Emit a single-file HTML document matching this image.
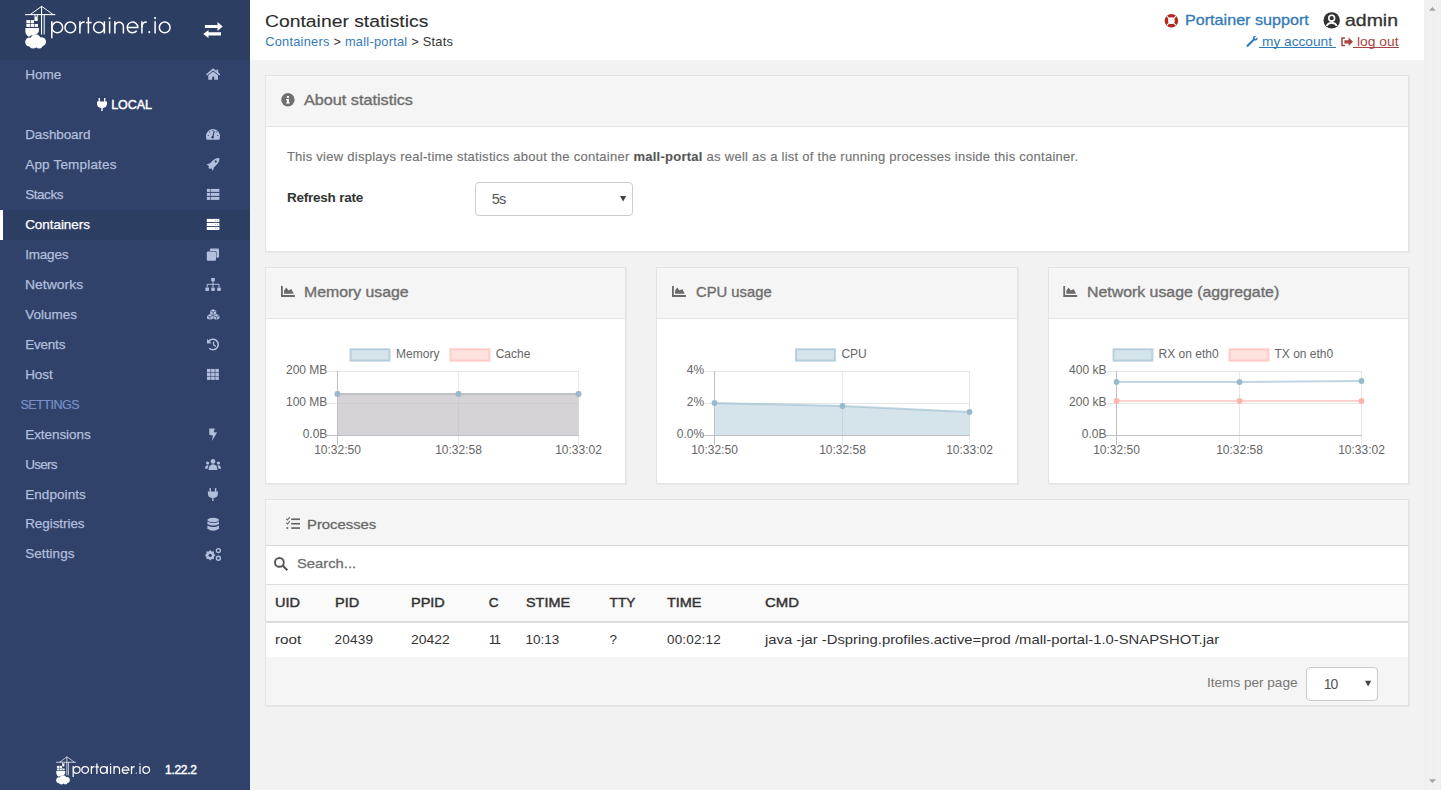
<!DOCTYPE html>
<html><head><meta charset="utf-8"><style>
html,body{margin:0;padding:0;width:1441px;height:790px;overflow:hidden;background:#f2f2f2;font-family:"Liberation Sans",sans-serif;}
.t{position:absolute;white-space:nowrap;}
svg{position:absolute;overflow:visible}
</style></head><body>
<div style="position:absolute;left:0;top:0;width:250px;height:790px;background:#30426a"></div>
<div style="position:absolute;left:0;top:0;width:250px;height:60px;background:#2d3e63"></div>
<div style="position:absolute;left:0;top:210px;width:250px;height:30px;background:#2d3e63"></div>
<div style="position:absolute;left:0;top:210px;width:3px;height:30px;background:#fff"></div>
<div class="t" style="left:25.20px;top:66.70px;font-size:13.5px;line-height:16px;color:#b2bfdc;letter-spacing:-0.003px;-webkit-text-stroke:0.25px #b2bfdc;">Home</div>
<div class="t" style="left:25.20px;top:126.70px;font-size:13.5px;line-height:16px;color:#b2bfdc;letter-spacing:-0.105px;-webkit-text-stroke:0.25px #b2bfdc;">Dashboard</div>
<div class="t" style="left:25.20px;top:156.70px;font-size:13.5px;line-height:16px;color:#b2bfdc;letter-spacing:0.187px;-webkit-text-stroke:0.25px #b2bfdc;">App Templates</div>
<div class="t" style="left:25.20px;top:186.70px;font-size:13.5px;line-height:16px;color:#b2bfdc;letter-spacing:-0.443px;-webkit-text-stroke:0.25px #b2bfdc;">Stacks</div>
<div class="t" style="left:25.20px;top:216.70px;font-size:13.5px;line-height:16px;color:#fff;letter-spacing:-0.065px;-webkit-text-stroke:0.25px #fff;">Containers</div>
<div class="t" style="left:25.20px;top:246.70px;font-size:13.5px;line-height:16px;color:#b2bfdc;letter-spacing:-0.194px;-webkit-text-stroke:0.25px #b2bfdc;">Images</div>
<div class="t" style="left:25.20px;top:276.70px;font-size:13.5px;line-height:16px;color:#b2bfdc;transform:scaleX(1.0327);transform-origin:0 0;-webkit-text-stroke:0.25px #b2bfdc;">Networks</div>
<div class="t" style="left:25.20px;top:306.70px;font-size:13.5px;line-height:16px;color:#b2bfdc;letter-spacing:-0.013px;-webkit-text-stroke:0.25px #b2bfdc;">Volumes</div>
<div class="t" style="left:25.20px;top:336.70px;font-size:13.5px;line-height:16px;color:#b2bfdc;letter-spacing:-0.214px;-webkit-text-stroke:0.25px #b2bfdc;">Events</div>
<div class="t" style="left:25.20px;top:366.70px;font-size:13.5px;line-height:16px;color:#b2bfdc;letter-spacing:-0.086px;-webkit-text-stroke:0.25px #b2bfdc;">Host</div>
<div class="t" style="left:25.20px;top:426.50px;font-size:13.5px;line-height:16px;color:#b2bfdc;letter-spacing:-0.060px;-webkit-text-stroke:0.25px #b2bfdc;">Extensions</div>
<div class="t" style="left:25.20px;top:456.50px;font-size:13.5px;line-height:16px;color:#b2bfdc;letter-spacing:-0.713px;-webkit-text-stroke:0.25px #b2bfdc;">Users</div>
<div class="t" style="left:25.20px;top:486.50px;font-size:13.5px;line-height:16px;color:#b2bfdc;letter-spacing:0.070px;-webkit-text-stroke:0.25px #b2bfdc;">Endpoints</div>
<div class="t" style="left:25.20px;top:516.30px;font-size:13.5px;line-height:16px;color:#b2bfdc;letter-spacing:-0.069px;-webkit-text-stroke:0.25px #b2bfdc;">Registries</div>
<div class="t" style="left:25.20px;top:546.10px;font-size:13.5px;line-height:16px;color:#b2bfdc;letter-spacing:0.074px;-webkit-text-stroke:0.25px #b2bfdc;">Settings</div>
<div class="t" style="left:111.20px;top:97.50px;font-size:12.5px;line-height:15px;color:#fff;letter-spacing:-0.048px;-webkit-text-stroke:0.45px #fff;">LOCAL</div>
<div class="t" style="left:20.40px;top:397.70px;font-size:12.6px;line-height:15px;color:#7890c6;letter-spacing:-0.515px;-webkit-text-stroke:0.2px #7890c6;">SETTINGS</div>
<div style="position:absolute;left:250px;top:0;width:1174px;height:790px;background:#f2f2f2"></div>
<div style="position:absolute;left:250px;top:0;width:1174px;height:60px;background:#fff"></div>
<div style="position:absolute;left:250px;top:60px;width:1174px;height:1px;background:#f4f4f4"></div>
<div style="position:absolute;left:1424px;top:0;width:17px;height:790px;background:repeating-linear-gradient(90deg,#eeeeee 0px,#eeeeee 1px,#f2f2f2 1px,#f2f2f2 2px)"></div>
<div class="t" style="left:265.20px;top:11.50px;font-size:17px;line-height:20px;color:#2c2c2c;transform:scaleX(1.1371);transform-origin:0 0;-webkit-text-stroke:0.1px #2c2c2c;">Container statistics</div>
<div class="t" style="left:265.20px;top:33.80px;font-size:12.8px;line-height:15px;color:#333;letter-spacing:0.25px;"><span style="color:#337ab7">Containers</span> &gt; <span style="color:#337ab7">mall-portal</span> &gt; Stats</div>
<div class="t" style="left:1184.60px;top:12.30px;font-size:14.5px;line-height:17px;color:#337ab7;transform:scaleX(1.1130);transform-origin:0 0;-webkit-text-stroke:0.3px #337ab7;">Portainer support</div>
<div class="t" style="left:1345.30px;top:10.70px;font-size:17px;line-height:20px;color:#333;transform:scaleX(1.1447);transform-origin:0 0;-webkit-text-stroke:0.3px #333;">admin</div>
<div class="t" style="left:1261.50px;top:33.50px;font-size:13px;line-height:16px;color:#337ab7;transform:scaleX(1.0531);transform-origin:0 0;">my account</div>
<div class="t" style="left:1357.00px;top:33.50px;font-size:13px;line-height:16px;color:#a94442;transform:scaleX(1.0633);transform-origin:0 0;">log out</div>
<div style="position:absolute;left:1259px;top:47px;width:77px;height:1px;background:#337ab7"></div>
<div style="position:absolute;left:1353px;top:47px;width:46px;height:1px;background:#a94442"></div>
<div style="position:absolute;left:265px;top:75px;width:1144px;height:177px;background:#fff;border:1px solid #e3e3e3;box-sizing:border-box;box-shadow:1px 1px 1px rgba(0,0,0,0.04)"></div>
<div style="position:absolute;left:266px;top:76px;width:1142px;height:51px;background:#f5f5f5;border-bottom:1px solid #e3e3e3;box-sizing:border-box"></div>
<div class="t" style="left:304.00px;top:92.30px;font-size:14.3px;line-height:17px;color:#6e6e6e;transform:scaleX(1.1334);transform-origin:0 0;-webkit-text-stroke:0.35px #6e6e6e;">About statistics</div>
<div class="t" style="left:286.90px;top:148.60px;font-size:13px;line-height:16px;color:#737373;letter-spacing:0.26px;-webkit-text-stroke:0.15px #737373;">This view displays real-time statistics about the container <b style="color:#555">mall-portal</b> as well as a list of the running processes inside this container.</div>
<div class="t" style="left:286.90px;top:189.70px;font-size:13.5px;line-height:16px;color:#333;font-weight:bold;letter-spacing:-0.217px;">Refresh rate</div>
<div style="position:absolute;left:475px;top:182px;width:158px;height:34px;background:#fff;border:1px solid #ccc;border-radius:4px;box-sizing:border-box"></div>
<div class="t" style="left:491.80px;top:190.60px;font-size:14.5px;line-height:17px;color:#555;letter-spacing:-0.814px;">5s</div>
<div style="position:absolute;left:265px;top:267px;width:361px;height:217px;background:#fff;border:1px solid #e3e3e3;box-sizing:border-box;box-shadow:1px 1px 1px rgba(0,0,0,0.04)"></div>
<div style="position:absolute;left:266px;top:268px;width:359px;height:51px;background:#f5f5f5;border-bottom:1px solid #e3e3e3;box-sizing:border-box"></div>
<div class="t" style="left:304.30px;top:284.10px;font-size:14.3px;line-height:17px;color:#6e6e6e;transform:scaleX(1.1070);transform-origin:0 0;-webkit-text-stroke:0.35px #6e6e6e;">Memory usage</div>
<div style="position:absolute;left:656px;top:267px;width:362px;height:217px;background:#fff;border:1px solid #e3e3e3;box-sizing:border-box;box-shadow:1px 1px 1px rgba(0,0,0,0.04)"></div>
<div style="position:absolute;left:657px;top:268px;width:360px;height:51px;background:#f5f5f5;border-bottom:1px solid #e3e3e3;box-sizing:border-box"></div>
<div class="t" style="left:695.70px;top:284.10px;font-size:14.3px;line-height:17px;color:#6e6e6e;transform:scaleX(1.0352);transform-origin:0 0;-webkit-text-stroke:0.35px #6e6e6e;">CPU usage</div>
<div style="position:absolute;left:1048px;top:267px;width:361px;height:217px;background:#fff;border:1px solid #e3e3e3;box-sizing:border-box;box-shadow:1px 1px 1px rgba(0,0,0,0.04)"></div>
<div style="position:absolute;left:1049px;top:268px;width:359px;height:51px;background:#f5f5f5;border-bottom:1px solid #e3e3e3;box-sizing:border-box"></div>
<div class="t" style="left:1087.20px;top:284.10px;font-size:14.3px;line-height:17px;color:#6e6e6e;transform:scaleX(1.1092);transform-origin:0 0;-webkit-text-stroke:0.35px #6e6e6e;">Network usage (aggregate)</div>
<div style="position:absolute;left:265px;top:499px;width:1144px;height:207px;background:#fff;border:1px solid #e3e3e3;box-sizing:border-box;box-shadow:1px 1px 1px rgba(0,0,0,0.04)"></div>
<div style="position:absolute;left:266px;top:500px;width:1142px;height:46px;background:#f5f5f5;border-bottom:1px solid #e3e3e3;box-sizing:border-box"></div>
<div style="position:absolute;left:266px;top:545px;width:1142px;height:40px;background:#fff;border-top:1px solid #d9d9d9;border-bottom:1px solid #ddd;box-sizing:border-box"></div>
<div style="position:absolute;left:266px;top:585px;width:1142px;height:38px;background:#fafafa;border-bottom:2px solid #ddd;box-sizing:border-box"></div>
<div style="position:absolute;left:266px;top:623px;width:1142px;height:34px;background:#fff"></div>
<div style="position:absolute;left:266px;top:657px;width:1142px;height:48px;background:#f5f5f5"></div>
<div class="t" style="left:306.50px;top:516.90px;font-size:13.4px;line-height:16px;color:#686868;transform:scaleX(1.1078);transform-origin:0 0;-webkit-text-stroke:0.3px #686868;">Processes</div>
<div class="t" style="left:297.20px;top:556.10px;font-size:13px;line-height:16px;color:#707070;transform:scaleX(1.1360);transform-origin:0 0;-webkit-text-stroke:0.3px #707070;">Search...</div>
<div class="t" style="left:274.50px;top:595.00px;font-size:13.5px;line-height:16px;color:#333;transform:scaleX(1.0753);transform-origin:0 0;-webkit-text-stroke:0.45px #333;">UID</div>
<div class="t" style="left:274.50px;top:631.80px;font-size:13.5px;line-height:16px;color:#333;transform:scaleX(1.1263);transform-origin:0 0;">root</div>
<div class="t" style="left:334.50px;top:595.00px;font-size:13.5px;line-height:16px;color:#333;transform:scaleX(1.0753);transform-origin:0 0;-webkit-text-stroke:0.45px #333;">PID</div>
<div class="t" style="left:334.50px;top:631.80px;font-size:13.5px;line-height:16px;color:#333;letter-spacing:0.215px;">20439</div>
<div class="t" style="left:411.30px;top:595.00px;font-size:13.5px;line-height:16px;color:#333;transform:scaleX(1.0727);transform-origin:0 0;-webkit-text-stroke:0.45px #333;">PPID</div>
<div class="t" style="left:411.30px;top:631.80px;font-size:13.5px;line-height:16px;color:#333;transform:scaleX(1.0309);transform-origin:0 0;">20422</div>
<div class="t" style="left:488.70px;top:595.00px;font-size:13.5px;line-height:16px;color:#333;-webkit-text-stroke:0.45px #333;">C</div>
<div class="t" style="left:488.70px;top:631.80px;font-size:13.5px;line-height:16px;color:#333;letter-spacing:-1.8px;">11</div>
<div class="t" style="left:525.50px;top:595.00px;font-size:13.5px;line-height:16px;color:#333;transform:scaleX(1.0666);transform-origin:0 0;-webkit-text-stroke:0.45px #333;">STIME</div>
<div class="t" style="left:525.50px;top:631.80px;font-size:13.5px;line-height:16px;color:#333;letter-spacing:0px;">10:13</div>
<div class="t" style="left:609.50px;top:595.00px;font-size:13.5px;line-height:16px;color:#333;letter-spacing:0.152px;-webkit-text-stroke:0.45px #333;">TTY</div>
<div class="t" style="left:609.50px;top:631.80px;font-size:13.5px;line-height:16px;color:#333;letter-spacing:0px;">?</div>
<div class="t" style="left:667.00px;top:595.00px;font-size:13.5px;line-height:16px;color:#333;transform:scaleX(1.0699);transform-origin:0 0;-webkit-text-stroke:0.45px #333;">TIME</div>
<div class="t" style="left:667.00px;top:631.80px;font-size:13.5px;line-height:16px;color:#333;letter-spacing:0.165px;">00:02:12</div>
<div class="t" style="left:764.50px;top:595.00px;font-size:13.5px;line-height:16px;color:#333;transform:scaleX(1.1059);transform-origin:0 0;-webkit-text-stroke:0.45px #333;">CMD</div>
<div class="t" style="left:764.50px;top:631.80px;font-size:13.5px;line-height:16px;color:#333;transform:scaleX(1.0977);transform-origin:0 0;">java -jar -Dspring.profiles.active=prod /mall-portal-1.0-SNAPSHOT.jar</div>
<div class="t" style="left:1206.80px;top:674.50px;font-size:13px;line-height:16px;color:#767676;transform:scaleX(1.0437);transform-origin:0 0;">Items per page</div>
<div style="position:absolute;left:1306px;top:667px;width:72px;height:34px;background:#fff;border:1px solid #ccc;border-radius:4px;box-sizing:border-box"></div>
<div class="t" style="left:1323.80px;top:675.50px;font-size:14px;line-height:17px;color:#555;letter-spacing:-0.972px;">10</div>
<div class="t" style="right:1113.70px;top:363.40px;font-size:12px;line-height:14px;color:#666;">200 MB</div>
<div class="t" style="right:1113.70px;top:395.40px;font-size:12px;line-height:14px;color:#666;">100 MB</div>
<div class="t" style="right:1113.70px;top:427.40px;font-size:12px;line-height:14px;color:#666;">0.0B</div>
<div class="t" style="right:736.80px;top:363.40px;font-size:12px;line-height:14px;color:#666;">4%</div>
<div class="t" style="right:736.80px;top:395.40px;font-size:12px;line-height:14px;color:#666;">2%</div>
<div class="t" style="right:736.80px;top:427.40px;font-size:12px;line-height:14px;color:#666;">0.0%</div>
<div class="t" style="right:334.60px;top:363.40px;font-size:12px;line-height:14px;color:#666;">400 kB</div>
<div class="t" style="right:334.60px;top:395.40px;font-size:12px;line-height:14px;color:#666;">200 kB</div>
<div class="t" style="right:334.60px;top:427.40px;font-size:12px;line-height:14px;color:#666;">0.0B</div>
<div class="t" style="left:314.14px;top:442.70px;font-size:12px;line-height:14px;color:#666;">10:32:50</div>
<div class="t" style="left:435.14px;top:442.70px;font-size:12px;line-height:14px;color:#666;">10:32:58</div>
<div class="t" style="left:555.14px;top:442.70px;font-size:12px;line-height:14px;color:#666;">10:33:02</div>
<div class="t" style="left:691.14px;top:442.70px;font-size:12px;line-height:14px;color:#666;">10:32:50</div>
<div class="t" style="left:819.14px;top:442.70px;font-size:12px;line-height:14px;color:#666;">10:32:58</div>
<div class="t" style="left:946.14px;top:442.70px;font-size:12px;line-height:14px;color:#666;">10:33:02</div>
<div class="t" style="left:1093.14px;top:442.70px;font-size:12px;line-height:14px;color:#666;">10:32:50</div>
<div class="t" style="left:1216.14px;top:442.70px;font-size:12px;line-height:14px;color:#666;">10:32:58</div>
<div class="t" style="left:1338.14px;top:442.70px;font-size:12px;line-height:14px;color:#666;">10:33:02</div>
<div class="t" style="left:396.10px;top:347.00px;font-size:12px;line-height:14px;color:#666;">Memory</div>
<div class="t" style="left:495.70px;top:347.00px;font-size:12px;line-height:14px;color:#666;">Cache</div>
<div class="t" style="left:841.40px;top:347.00px;font-size:12px;line-height:14px;color:#666;">CPU</div>
<div class="t" style="left:1158.60px;top:347.00px;font-size:12px;line-height:14px;color:#666;">RX on eth0</div>
<div class="t" style="left:1274.50px;top:347.00px;font-size:12px;line-height:14px;color:#666;">TX on eth0</div>
<div class="t" style="left:165.00px;top:762.70px;font-size:12px;line-height:14px;color:#fff;letter-spacing:-0.273px;-webkit-text-stroke:0.45px #fff;">1.22.2</div>
<svg style="left:1424px;top:0" width="17" height="790"><path d="M5,10.8 L8.4,7 L11.8,10.8 Z" fill="#a3a3a3"/><path d="M5,779.2 L8.5,783 L12,779.2 Z" fill="#a3a3a3"/></svg>
<svg style="left:0;top:0" width="1441" height="790" viewBox="0 0 1441 790"><path d="M620,196 L626.2,196 L623.1,201.6 Z" fill="#444"/><path d="M1365,680.8 L1371.2,680.8 L1368.1,686.4 Z" fill="#444"/><line x1="327" y1="371.5" x2="578.5" y2="371.5" stroke="#e6e6e6" stroke-width="1"/><line x1="327" y1="403.5" x2="578.5" y2="403.5" stroke="#e6e6e6" stroke-width="1"/><line x1="458.5" y1="371" x2="458.5" y2="445" stroke="#e6e6e6" stroke-width="1"/><line x1="578.5" y1="371" x2="578.5" y2="445" stroke="#e6e6e6" stroke-width="1"/><path d="M337.5,435.5 L337.5,394 L458.5,394 L578.5,394 L578.5,435.5 Z" fill="rgba(255,180,174,0.4)"/><path d="M337.5,435.5 L337.5,394 L458.5,394 L578.5,394 L578.5,435.5 Z" fill="rgba(151,187,205,0.4)"/><path d="M337.5,394 L458.5,394 L578.5,394" fill="none" stroke="rgba(255,180,174,0.6)" stroke-width="2"/><path d="M337.5,394 L458.5,394 L578.5,394" fill="none" stroke="rgba(151,187,205,0.6)" stroke-width="2"/><line x1="327" y1="435.5" x2="578.5" y2="435.5" stroke="#bfbfbf" stroke-width="1"/><line x1="337.5" y1="371" x2="337.5" y2="445" stroke="#bfbfbf" stroke-width="1"/><circle cx="337.5" cy="394" r="2.9" fill="rgb(255,180,174)"/><circle cx="458.5" cy="394" r="2.9" fill="rgb(255,180,174)"/><circle cx="578.5" cy="394" r="2.9" fill="rgb(255,180,174)"/><circle cx="337.5" cy="394" r="2.9" fill="rgb(151,187,205)"/><circle cx="458.5" cy="394" r="2.9" fill="rgb(151,187,205)"/><circle cx="578.5" cy="394" r="2.9" fill="rgb(151,187,205)"/><rect x="350.5" y="349.2" width="39" height="11.5" fill="rgba(151,187,205,0.4)" stroke="rgba(151,187,205,0.6)" stroke-width="2"/><rect x="450.5" y="349.2" width="39" height="11.5" fill="rgba(255,180,174,0.4)" stroke="rgba(255,180,174,0.6)" stroke-width="2"/><line x1="704" y1="371.5" x2="969.5" y2="371.5" stroke="#e6e6e6" stroke-width="1"/><line x1="704" y1="403.5" x2="969.5" y2="403.5" stroke="#e6e6e6" stroke-width="1"/><line x1="842.5" y1="371" x2="842.5" y2="445" stroke="#e6e6e6" stroke-width="1"/><line x1="969.5" y1="371" x2="969.5" y2="445" stroke="#e6e6e6" stroke-width="1"/><path d="M714.5,435.5 L714.5,403 L842.5,406 L969.5,412 L969.5,435.5 Z" fill="rgba(151,187,205,0.4)"/><path d="M714.5,403 L842.5,406 L969.5,412" fill="none" stroke="rgba(151,187,205,0.6)" stroke-width="2"/><line x1="704" y1="435.5" x2="969.5" y2="435.5" stroke="#bfbfbf" stroke-width="1"/><line x1="714.5" y1="371" x2="714.5" y2="445" stroke="#bfbfbf" stroke-width="1"/><circle cx="714.5" cy="403" r="2.9" fill="rgb(151,187,205)"/><circle cx="842.5" cy="406" r="2.9" fill="rgb(151,187,205)"/><circle cx="969.5" cy="412" r="2.9" fill="rgb(151,187,205)"/><rect x="796" y="349.2" width="39" height="11.5" fill="rgba(151,187,205,0.4)" stroke="rgba(151,187,205,0.6)" stroke-width="2"/><line x1="1106" y1="371.5" x2="1361.5" y2="371.5" stroke="#e6e6e6" stroke-width="1"/><line x1="1106" y1="403.5" x2="1361.5" y2="403.5" stroke="#e6e6e6" stroke-width="1"/><line x1="1239.5" y1="371" x2="1239.5" y2="445" stroke="#e6e6e6" stroke-width="1"/><line x1="1361.5" y1="371" x2="1361.5" y2="445" stroke="#e6e6e6" stroke-width="1"/><path d="M1116.5,401 L1239.5,401 L1361.5,401" fill="none" stroke="rgba(255,180,174,0.6)" stroke-width="2"/><path d="M1116.5,382 L1239.5,382 L1361.5,381" fill="none" stroke="rgba(151,187,205,0.6)" stroke-width="2"/><line x1="1106" y1="435.5" x2="1361.5" y2="435.5" stroke="#bfbfbf" stroke-width="1"/><line x1="1116.5" y1="371" x2="1116.5" y2="445" stroke="#bfbfbf" stroke-width="1"/><circle cx="1116.5" cy="401" r="2.9" fill="rgb(255,180,174)"/><circle cx="1239.5" cy="401" r="2.9" fill="rgb(255,180,174)"/><circle cx="1361.5" cy="401" r="2.9" fill="rgb(255,180,174)"/><circle cx="1116.5" cy="382" r="2.9" fill="rgb(151,187,205)"/><circle cx="1239.5" cy="382" r="2.9" fill="rgb(151,187,205)"/><circle cx="1361.5" cy="381" r="2.9" fill="rgb(151,187,205)"/><rect x="1113.5" y="349.2" width="39" height="11.5" fill="rgba(151,187,205,0.4)" stroke="rgba(151,187,205,0.6)" stroke-width="2"/><rect x="1229.5" y="349.2" width="39" height="11.5" fill="rgba(255,180,174,0.4)" stroke="rgba(255,180,174,0.6)" stroke-width="2"/><g transform="translate(24.6,5.5) scale(1.0)" fill="#fff" stroke="none"><path d="M0.4,9.1 L30.7,9.1" stroke="#fff" stroke-width="1.1" fill="none"/><path d="M5.5,9.1 L17.1,0.8 L28.5,9.1" stroke="#fff" stroke-width="1.0" fill="none"/><rect x="16.4" y="0.6" width="1.1" height="28.5"/><rect x="19.1" y="9" width="1.0" height="20"/><rect x="9.9" y="9.2" width="3.2" height="6.3"/><rect x="10.9" y="9.4" width="1.2" height="1.8" fill="#2d3e63"/><rect x="1.7" y="14.6" width="3.9" height="3.2"/><rect x="6.2" y="14.6" width="3.2" height="3.2"/><rect x="1.7" y="18.5" width="3.9" height="2.9"/><rect x="6.2" y="18.5" width="3.2" height="2.9"/><rect x="10.0" y="18.5" width="3.4" height="2.9"/><path d="M0.8,22.6 L14.3,22.6 L14.3,25.8 Q13.6,28.6 9.5,29.2 Q6,29.8 4.2,31.2 Q0.9,29.5 0.8,26 Z"/><circle cx="5.2" cy="36.5" r="4.6"/><circle cx="11" cy="33.8" r="5"/><circle cx="16.8" cy="36.3" r="4.6"/><circle cx="8.5" cy="39.5" r="3.6"/><circle cx="14.5" cy="39.3" r="3.6"/></g><g transform="translate(55.8,756.3) scale(0.655)" fill="#fff" stroke="none"><path d="M0.4,9.1 L30.7,9.1" stroke="#fff" stroke-width="1.1" fill="none"/><path d="M5.5,9.1 L17.1,0.8 L28.5,9.1" stroke="#fff" stroke-width="1.0" fill="none"/><rect x="16.4" y="0.6" width="1.1" height="28.5"/><rect x="19.1" y="9" width="1.0" height="20"/><rect x="9.9" y="9.2" width="3.2" height="6.3"/><rect x="10.9" y="9.4" width="1.2" height="1.8" fill="#2d3e63"/><rect x="1.7" y="14.6" width="3.9" height="3.2"/><rect x="6.2" y="14.6" width="3.2" height="3.2"/><rect x="1.7" y="18.5" width="3.9" height="2.9"/><rect x="6.2" y="18.5" width="3.2" height="2.9"/><rect x="10.0" y="18.5" width="3.4" height="2.9"/><path d="M0.8,22.6 L14.3,22.6 L14.3,25.8 Q13.6,28.6 9.5,29.2 Q6,29.8 4.2,31.2 Q0.9,29.5 0.8,26 Z"/><circle cx="5.2" cy="36.5" r="4.6"/><circle cx="11" cy="33.8" r="5"/><circle cx="16.8" cy="36.3" r="4.6"/><circle cx="8.5" cy="39.5" r="3.6"/><circle cx="14.5" cy="39.3" r="3.6"/></g><g transform="translate(50.9,33.5) scale(1.0)" stroke="#fff" stroke-width="1.5" fill="none"><path d="M0.9,-12.2 L0.9,4.7"/><circle cx="6.4" cy="-6.1" r="5.35"/><circle cx="19.4" cy="-6.1" r="5.35"/><path d="M29.0,-12.2 L29.0,0"/><path d="M29,-6.3 Q29,-11.45 33.8,-11.45"/><path d="M37.5,-16.4 L37.5,0"/><path d="M35.1,-10.9 L40.8,-10.9"/><circle cx="48.0" cy="-6.1" r="5.35"/><path d="M53.5,-12.2 L53.5,0"/><path d="M58.7,-12.2 L58.7,0"/><circle cx="58.7" cy="-15.2" r="1.05" stroke="none" fill="#fff"/><path d="M64,0 L64,-12.2 M64,-7.0 A4.25,4.25 0 0 1 72.5,-7.0 L72.5,0"/><path d="M76.25,-6.1 L86.95,-6.1 A5.35,5.35 0 1 0 85.8,-2.7"/><path d="M91.0,-12.2 L91.0,0"/><path d="M91,-6.3 Q91,-11.45 95.9,-11.45"/><circle cx="98.4" cy="-1.4" r="1.05" stroke="none" fill="#fff"/><path d="M104.2,-12.2 L104.2,0"/><circle cx="104.2" cy="-15.4" r="1.05" stroke="none" fill="#fff"/><circle cx="113.8" cy="-6.1" r="5.35"/></g><g transform="translate(72.6,774.0) scale(0.647)" stroke="#fff" stroke-width="1.9" fill="none"><path d="M0.9,-12.2 L0.9,4.7"/><circle cx="6.4" cy="-6.1" r="5.1499999999999995"/><circle cx="19.4" cy="-6.1" r="5.1499999999999995"/><path d="M29.0,-12.2 L29.0,0"/><path d="M29,-6.3 Q29,-11.45 33.8,-11.45"/><path d="M37.5,-16.4 L37.5,0"/><path d="M35.1,-10.9 L40.8,-10.9"/><circle cx="48.0" cy="-6.1" r="5.1499999999999995"/><path d="M53.5,-12.2 L53.5,0"/><path d="M58.7,-12.2 L58.7,0"/><circle cx="58.7" cy="-15.2" r="1.05" stroke="none" fill="#fff"/><path d="M64,0 L64,-12.2 M64,-7.0 A4.25,4.25 0 0 1 72.5,-7.0 L72.5,0"/><path d="M76.25,-6.1 L86.95,-6.1 A5.1499999999999995,5.1499999999999995 0 1 0 85.8,-2.7"/><path d="M91.0,-12.2 L91.0,0"/><path d="M91,-6.3 Q91,-11.45 95.9,-11.45"/><circle cx="98.4" cy="-1.4" r="1.05" stroke="none" fill="#fff"/><path d="M104.2,-12.2 L104.2,0"/><circle cx="104.2" cy="-15.4" r="1.05" stroke="none" fill="#fff"/><circle cx="113.8" cy="-6.1" r="5.1499999999999995"/></g><path fill="#fff" d="M204.9,25 L217.5,25 L217.5,21.9 L222.7,26.4 L217.5,30.9 L217.5,27.9 L204.9,27.9 Z"/><path fill="#fff" d="M221,32.2 L208.5,32.2 L208.5,30 L203.3,33.9 L208.5,37.9 L208.5,35.6 L221,35.6 Z"/><path fill="none" stroke="#b2bfdc" stroke-width="1.5" d="M206.6,74.8 L213.2,69.3 L219.8,74.8"/><rect x="216.4" y="69.6" width="1.8" height="3.4" fill="#b2bfdc"/><path fill="#b2bfdc" d="M208.3,75.2 L213.2,71.6 L218,75.2 L218,79.8 L214.2,79.8 L214.2,76.8 L212.2,76.8 L212.2,79.8 L208.3,79.8 Z"/><path fill="#b2bfdc" d="M206.2,138.2 A7.1,7.1 0 1 1 219.8,138.2 L219.2,139.8 L206.8,139.8 Z"/><path d="M212.6,137.2 L214.3,131" stroke="#30426a" stroke-width="1.1"/><circle cx="212.7" cy="137.3" r="1.3" fill="#30426a"/><circle cx="208.3" cy="135.5" r="0.6" fill="#30426a"/><circle cx="209.7" cy="131.8" r="0.6" fill="#30426a"/><circle cx="213" cy="130.6" r="0.6" fill="#30426a"/><circle cx="216.4" cy="131.8" r="0.6" fill="#30426a"/><circle cx="217.8" cy="135.5" r="0.6" fill="#30426a"/><g transform="translate(213.2,164.1) rotate(45)"><path fill="#b2bfdc" d="M0,-8.6 C2.9,-6.5 3.2,-3 2.8,1.6 L4.5,4.9 L1.6,4.3 L1,5.8 L-1,5.8 L-1.6,4.3 L-4.5,4.9 L-2.8,1.6 C-3.2,-3 -2.9,-6.5 0,-8.6 Z"/><circle cx="0" cy="-3.6" r="1.15" fill="#30426a"/></g><rect x="206.9" y="188.90" width="3.5" height="3.0" fill="#b2bfdc"/><rect x="211.0" y="188.90" width="8.4" height="3.0" fill="#b2bfdc"/><rect x="206.9" y="192.90" width="3.5" height="3.0" fill="#b2bfdc"/><rect x="211.0" y="192.90" width="8.4" height="3.0" fill="#b2bfdc"/><rect x="206.9" y="196.90" width="3.5" height="3.0" fill="#b2bfdc"/><rect x="211.0" y="196.90" width="8.4" height="3.0" fill="#b2bfdc"/><rect x="206.8" y="218.90" width="12.6" height="3.1" fill="#fff"/><circle cx="215.6" cy="220.45" r="0.5" fill="#8a96b8"/><circle cx="217.4" cy="220.45" r="0.5" fill="#8a96b8"/><rect x="206.8" y="222.90" width="12.6" height="3.1" fill="#fff"/><circle cx="215.6" cy="224.45" r="0.5" fill="#8a96b8"/><circle cx="217.4" cy="224.45" r="0.5" fill="#8a96b8"/><rect x="206.8" y="226.90" width="12.6" height="3.1" fill="#fff"/><circle cx="215.6" cy="228.45" r="0.5" fill="#8a96b8"/><circle cx="217.4" cy="228.45" r="0.5" fill="#8a96b8"/><rect x="209.9" y="248.4" width="9.1" height="9.3" rx="1.2" fill="#b2bfdc"/><rect x="206.3" y="251" width="10.2" height="10.2" rx="1.4" fill="#30426a"/><rect x="206.8" y="251.5" width="9.2" height="9.2" rx="1.2" fill="#b2bfdc"/><rect x="211.2" y="278" width="3.6" height="3.3" fill="#b2bfdc"/><path fill="none" stroke="#b2bfdc" stroke-width="1" d="M213,281 L213,287.5 M207.2,287.5 L207.2,284.3 L219,284.3 L219,287.5"/><rect x="205.4" y="287.6" width="3.6" height="3.3" fill="#b2bfdc"/><rect x="211.2" y="287.6" width="3.6" height="3.3" fill="#b2bfdc"/><rect x="217.2" y="287.6" width="3.6" height="3.3" fill="#b2bfdc"/><path fill="#b2bfdc" d="M213.2,309.2 L216.2,310.59999999999997 L216.2,313.8 L213.2,315.2 L210.2,313.8 L210.2,310.59999999999997 Z"/><path fill="none" stroke="#30426a" stroke-width="0.7" d="M210.2,310.59999999999997 L213.2,312.2 L216.2,310.59999999999997 M213.2,312.2 L213.2,315.2"/><path fill="#b2bfdc" d="M210,314 L213,315.4 L213,318.6 L210,320 L207,318.6 L207,315.4 Z"/><path fill="none" stroke="#30426a" stroke-width="0.7" d="M207,315.4 L210,317 L213,315.4 M210,317 L210,320"/><path fill="#b2bfdc" d="M216.4,314 L219.4,315.4 L219.4,318.6 L216.4,320 L213.4,318.6 L213.4,315.4 Z"/><path fill="none" stroke="#30426a" stroke-width="0.7" d="M213.4,315.4 L216.4,317 L219.4,315.4 M216.4,317 L216.4,320"/><path fill="none" stroke="#b2bfdc" stroke-width="1.6" d="M208.6,341.5 A5.3,5.3 0 1 1 209.2,348.2"/><path fill="#b2bfdc" d="M207,338.7 L207,343.6 L211.6,343.2 Z"/><path fill="none" stroke="#b2bfdc" stroke-width="1.3" d="M213.6,341.6 L213.6,345 L215.8,346.4"/><rect x="207.00" y="368.90" width="3.55" height="3.3" fill="#b2bfdc"/><rect x="211.15" y="368.90" width="3.55" height="3.3" fill="#b2bfdc"/><rect x="215.30" y="368.90" width="3.55" height="3.3" fill="#b2bfdc"/><rect x="207.00" y="372.75" width="3.55" height="3.3" fill="#b2bfdc"/><rect x="211.15" y="372.75" width="3.55" height="3.3" fill="#b2bfdc"/><rect x="215.30" y="372.75" width="3.55" height="3.3" fill="#b2bfdc"/><rect x="207.00" y="376.60" width="3.55" height="3.3" fill="#b2bfdc"/><rect x="211.15" y="376.60" width="3.55" height="3.3" fill="#b2bfdc"/><rect x="215.30" y="376.60" width="3.55" height="3.3" fill="#b2bfdc"/><path fill="#b2bfdc" d="M209.2,428.6 L214.8,428.6 L213.6,432.2 L217.1,432.6 L211.9,440.9 L212.9,435.4 L209.4,435 Z"/><circle cx="213" cy="461.4" r="2.3" fill="#b2bfdc"/><path fill="#b2bfdc" d="M208.6,470 Q208.6,464.5 213,464.3 Q217.4,464.5 217.4,470 Z"/><circle cx="207.6" cy="463" r="1.6" fill="#b2bfdc"/><circle cx="218.4" cy="463" r="1.6" fill="#b2bfdc"/><path fill="#b2bfdc" d="M205,468.8 Q205,465.3 207.8,465.3 L208.6,465.5 Q207.6,466.8 207.6,468.8 Z M221,468.8 Q221,465.3 218.2,465.3 L217.4,465.5 Q218.4,466.8 218.4,468.8 Z"/><rect x="209.5" y="488" width="1.4" height="4" fill="#b2bfdc"/><rect x="214.9" y="488" width="1.4" height="4" fill="#b2bfdc"/><path fill="#b2bfdc" d="M207.9,491.6 L217.9,491.6 L217.9,493.5 Q217.9,497.5 213.6,498 L213.6,501 L212.20000000000002,501 L212.20000000000002,498 Q207.9,497.5 207.9,493.5 Z"/><rect x="98.6" y="98" width="1.4" height="4" fill="#fff"/><rect x="104" y="98" width="1.4" height="4" fill="#fff"/><path fill="#fff" d="M97,101.6 L107,101.6 L107,103.5 Q107,107.5 102.7,108 L102.7,111 L101.3,111 L101.3,108 Q97,107.5 97,103.5 Z"/><ellipse cx="213.2" cy="520" rx="5.8" ry="2.2" fill="#b2bfdc"/><path fill="#b2bfdc" d="M207.4,521.4 Q213.2,524.6 219,521.4 L219,524 Q213.2,527.2 207.4,524 Z"/><path fill="#b2bfdc" d="M207.4,525.4 Q213.2,528.6 219,525.4 L219,528.8 Q213.2,532.6 207.4,528.8 Z"/><polygon fill="#b2bfdc" points="215.50,555.30 213.90,556.83 213.95,559.05 211.73,559.00 210.20,560.60 208.67,559.00 206.45,559.05 206.50,556.83 204.90,555.30 206.50,553.77 206.45,551.55 208.67,551.60 210.20,550.00 211.73,551.60 213.95,551.55 213.90,553.77"/><circle cx="210.2" cy="555.3" r="1.6" fill="#30426a"/><circle cx="218.4" cy="550.6" r="2" fill="none" stroke="#b2bfdc" stroke-width="1.4"/><circle cx="218.4" cy="558.2" r="2" fill="none" stroke="#b2bfdc" stroke-width="1.4"/><circle cx="1171.4" cy="20.7" r="5.1" fill="none" stroke="#b5261e" stroke-width="3.4"/><path stroke="#fff" stroke-width="1.1" d="M1166.8,16.1 L1169.2,18.5 M1176,16.1 L1173.6,18.5 M1166.8,25.3 L1169.2,22.9 M1176,25.3 L1173.6,22.9"/><circle cx="1331.7" cy="20.4" r="8.2" fill="#333"/><circle cx="1331.7" cy="18.2" r="2.9" fill="none" stroke="#fff" stroke-width="1.6"/><path fill="none" stroke="#fff" stroke-width="1.6" d="M1326.6,25.9 Q1328,22.9 1331.7,22.9 Q1335.4,22.9 1336.8,25.9"/><path fill="#337ab7" d="M1246.3,45.6 L1253,38.9 Q1252.5,36 1255.5,35.7 L1256.2,35.9 L1254.3,37.8 L1255.6,39.1 L1257.5,37.2 Q1258.2,40.6 1254.4,40.6 L1247.7,47.2 Z"/><path fill="none" stroke="#a94442" stroke-width="1.5" d="M1345,38 L1342,38 L1342,45.6 L1345,45.6"/><path fill="#a94442" d="M1344.4,40.2 L1348.6,40.2 L1348.6,37.6 L1353,41.8 L1348.6,46 L1348.6,43.4 L1344.4,43.4 Z"/><circle cx="287.9" cy="99.8" r="6.7" fill="#707070"/><rect x="286.9" y="96" width="2.1" height="1.9" fill="#fff"/><path fill="#fff" d="M286.1,99 L289,99 L289,102.4 L289.8,102.4 L289.8,103.6 L286.1,103.6 L286.1,102.4 L286.9,102.4 L286.9,100.2 L286.1,100.2 Z"/><path fill="#6a6a6a" d="M281,286 L282.8,286 L282.8,295 L294.9,295 L294.9,296.9 L281,296.9 Z M284.1,293.8 L284.1,290.5 L286.3,287.5 L288.5,290.4 L291.3,289 L293.8,293.8 Z"/><path fill="#6a6a6a" d="M672,286 L673.8,286 L673.8,295 L685.9,295 L685.9,296.9 L672,296.9 Z M675.1,293.8 L675.1,290.5 L677.3,287.5 L679.5,290.4 L682.3,289 L684.8,293.8 Z"/><path fill="#6a6a6a" d="M1063.3,286 L1065.1,286 L1065.1,295 L1077.2,295 L1077.2,296.9 L1063.3,296.9 Z M1066.3999999999999,293.8 L1066.3999999999999,290.5 L1068.6,287.5 L1070.8,290.4 L1073.6,289 L1076.1,293.8 Z"/><path fill="none" stroke="#666" stroke-width="1.1" d="M286.2,518.6 L287.5,520 L289.8,517.2 M286.2,522.6 L287.5,524 L289.8,521.2"/><rect x="286.4" y="527.1" width="1.8" height="1.8" fill="#666"/><rect x="291.2" y="518.4" width="8.8" height="1.7" fill="#666"/><rect x="291.2" y="522.9" width="8.8" height="1.7" fill="#666"/><rect x="291.2" y="527.2" width="8.8" height="1.7" fill="#666"/><circle cx="279.4" cy="562.4" r="4.4" fill="none" stroke="#555" stroke-width="1.9"/><path stroke="#555" stroke-width="2.1" d="M282.6,565.6 L287.3,570.3"/></svg>
</body></html>
